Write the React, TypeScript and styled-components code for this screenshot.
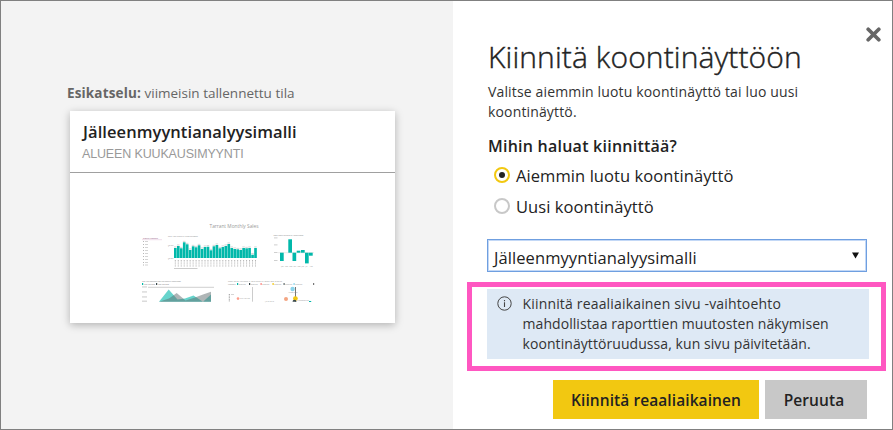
import React, { useState } from 'react';
import styled, { createGlobalStyle } from 'styled-components';

const GlobalStyle = createGlobalStyle`
  * { box-sizing: border-box; }
  body { margin: 0; }
  body, button { font-family: "Open Sans", "Noto Sans", sans-serif; color: #222; }
`;

const Dialog = styled.main`
  display: flex;
  width: 893px;
  height: 430px;
  border: 1px solid #808080;
  background: #fff;
  overflow: hidden;
`;

const PreviewPane = styled.section`
  flex: none;
  width: 452px;
  padding: 82px 0 0 66px;
  background: #f3f3f3;
`;

const PreviewLabel = styled.div`
  font-size: 13.5px;
  line-height: 20px;
  color: #666;
  white-space: nowrap;
  b { font-weight: 700; letter-spacing: 0.15px; }
`;

const Card = styled.article`
  display: flex;
  flex-direction: column;
  width: 325px;
  height: 212px;
  margin: 8px 0 0 3px;
  background: #fff;
  box-shadow: 0 2px 8px rgba(0, 0, 0, 0.27);
`;

const CardHeader = styled.header`
  height: 62px;
  padding: 9px 0 0 13px;
  border-bottom: 1px solid #a0a0a0;
  white-space: nowrap;
`;

const CardTitle = styled.h2`
  margin: 0;
  font-size: 16.5px;
  font-weight: 600;
  line-height: 24px;
  letter-spacing: 0.07px;
`;

const CardSubtitle = styled.div`
  margin: 2px 0 0 -1px;
  font: 12.5px/16px "Liberation Sans", sans-serif;
  letter-spacing: -0.15px;
  color: #999;
`;

const Thumbnail = styled.svg`
  display: block;
  width: 325px;
  height: 150px;
`;

const FormPane = styled.section`
  display: flex;
  flex: 1;
  padding: 35px 0 0 35px;
  white-space: nowrap;
`;

const Form = styled.div`
  flex: none;
  width: 378px;
`;

const CloseButton = styled.button`
  flex: none;
  width: 15px;
  height: 15px;
  margin-top: -9px;
  padding: 0;
  border: 0;
  background: none;
  svg { display: block; }
`;

const Title = styled.h1`
  margin: 1px 0 0;
  font-size: 30px;
  font-weight: 300;
  line-height: 40px;
  letter-spacing: 0.1px;
  -webkit-text-stroke: 0.4px #222;
`;

const Description = styled.p`
  margin: 5px 0 0;
  font-size: 14px;
  line-height: 20px;
  letter-spacing: 0.15px;
  color: #333;
`;

const Question = styled.h3`
  margin: 13px 0 3px;
  font-size: 16px;
  font-weight: 600;
  line-height: 22px;
  letter-spacing: 0.24px;
`;

const Option = styled.label`
  display: flex;
  align-items: center;
  gap: 6px;
  height: 31px;
  padding-left: 6px;
  font-size: 16.5px;
  letter-spacing: 0.08px;
`;

const Radio = styled.span<{ $checked: boolean }>`
  display: grid;
  place-items: center;
  width: 16px;
  height: 16px;
  margin-top: -1px;
  border: 2px solid ${p => (p.$checked ? '#f2c811' : '#c8c8c8')};
  border-radius: 50%;
  &::after {
    content: "";
    width: 6px;
    height: 6px;
    border-radius: 50%;
    background: ${p => (p.$checked ? '#222' : 'transparent')};
  }
`;

const Select = styled.div`
  display: flex;
  align-items: center;
  justify-content: space-between;
  width: 380px;
  height: 33px;
  margin: 17px 0 0 -1px;
  padding: 3px 7px 0 6px;
  border: 1px solid #6f9fe0;
  box-shadow: inset 0 0 0 1px #c3d8f6;
  font-size: 16.5px;
  letter-spacing: 0.08px;
  svg { margin-top: -3px; }
`;

const Highlight = styled.div`
  width: 419px;
  height: 89px;
  margin: 10px 0 0 -21px;
  padding: 2px 12px 7px 15px;
  border: 5px solid #ff57c1;
`;

const InfoBox = styled.div`
  display: flex;
  gap: 10.5px;
  height: 70px;
  padding: 5px 0 0 10px;
  background: #dee9f5;
  svg { flex: none; margin-top: 2px; }
`;

const InfoLine = styled.div<{ $spacing: number }>`
  font-size: 14px;
  line-height: 20px;
  letter-spacing: ${p => p.$spacing}px;
  color: #333;
`;

const Actions = styled.div`
  display: flex;
  gap: 6px;
  margin: 9px 0 0 65px;
`;

const ActionButton = styled.button<{ $primary?: boolean }>`
  width: ${p => (p.$primary ? 206 : 102)}px;
  height: 39px;
  flex: none;
  padding: 1px ${p => (p.$primary ? 0 : 4)}px 0 0;
  border: 0;
  background: ${p => (p.$primary ? '#f2c811' : '#c8c8c8')};
  font-size: 15.5px;
  font-weight: 600;
  letter-spacing: 0.08px;
`;

const salesBars = [248, 246, 248.3, 242.3, 244.3, 250, 246.3, 247.3, 245.3, 249, 247, 246.7, 250.3, 246.3, 245, 248.3, 247, 246, 244, 248, 249, 249.3, 250, 248, 248.3, 248, 254.7, 248];
const varianceBars = [[280, 252.7, 8.3], [288.3, 239.3, 13.4], [292.5, 252.7, 8.3], [296.7, 250.7, 2], [301, 250, 2.7], [305, 252.7, 10.7], [309, 252.7, 3]];
const legend = [[237, '#01b8aa'], [249, '#374649'], [260.5, '#fd817e'], [272.5, '#f2c811'], [283.5, '#5f6b6d'], [293.5, '#8ad4eb'], [313, '#777']] as const;

function ReportThumbnail() {
  return (
    <Thumbnail viewBox="70 173 325 150" fontFamily="Open Sans, sans-serif" fontSize="1.9" fill="#888">
      <text x="209.5" y="227.6" fontSize="5.8" fill="#999" textLength="49" lengthAdjust="spacingAndGlyphs">Tarrant Monthly Sales</text>

      <text x="143" y="239" fill="#8b4a75" textLength="15">District Manager</text>
      <path d="M142 239.7H162" stroke="#e4c8dc" strokeWidth=".6" />
      {[242, 245, 248, 251, 254, 257, 260, 263, 265.5].map(y => (
        <g key={y} opacity=".6">
          <rect x="143" y={y - 1} width="1" height="1" />
          <rect x="145" y={y - 1} width="3" height="1" opacity=".6" />
        </g>
      ))}

      <text x="168" y="237.2" textLength="30">This Year Sales by DistrictMonth</text>
      <text x="168" y="246">$0.5M</text>
      <text x="168" y="259">$0.0M</text>
      {salesBars.map((y, i) => (
        <g key={i}>
          <rect x={174 + i * 2.97} y={y} width="2.65" height={258 - y} fill="#01b8aa" />
          <rect x={174 + i * 2.97} y={y - 1.4} width="2.5" height=".7" opacity=".5" />
          <path d={`M${175.3 + i * 2.97} 260v3.6m0 1v2`} stroke="#aaa" strokeWidth=".9" strokeDasharray="1 .5" />
        </g>
      ))}
      <path d="M174 268.5H197.5" stroke="#ccc" />

      <text x="273.5" y="236" textLength="30">Total Sales Variance by FiscalMonth</text>
      {[238.5, 245.5, 253, 261].map(y => <rect key={y} x="274" y={y - 1} width="3.5" height=".8" opacity=".5" />)}
      <path d="M278 252.7H314" stroke="#ccc" strokeWidth=".4" />
      {varianceBars.map(([x, y, h]) => <rect key={x} x={x} y={y} width="3.7" height={h} fill="#01b8aa" />)}
      {['Jan', 'Feb', 'Mar', 'Apr', 'May', 'Jun', 'Jul', 'Aug'].map((m, i) => (
        <text key={m} x={281 + i * 4.1} y="267.3" fontSize="1.7">{m}</text>
      ))}

      <text x="142" y="282" textLength="39">This Year Sales and Last Year Sales by FiscalMonth</text>
      <rect x="142" y="283" width="1.2" height="2" fill="#01b8aa" />
      <text x="144" y="284.8" textLength="11">This Year Sales</text>
      <rect x="156" y="283" width="1.2" height="2" fill="#374649" />
      <text x="158" y="284.8" textLength="11">Last Year Sales</text>
      {[287.5, 292.5, 297.5, 301.7].map(y => <rect key={y} x="142" y={y - 1} width="5" height=".9" opacity=".5" />)}
      <path d="M148 287.3H214" stroke="#bbb" strokeWidth=".7" />
      <path d="M159 301.7L168.7 289.5L177.5 299.5L185 298.5L193.5 295.6L203 301.7L211 294.5V301.7Z" fill="#01b8aa" opacity=".6" />
      <path d="M159 301.7L169 298.5L176.7 293L185.5 300.5L195 297.5L203 294.5L211 291.7V301.7Z" fill="#5f6b6d" opacity=".5" />

      <text x="228" y="282" textLength="54">Total Sales Variance % and Sales by Store and District</text>
      <text x="228" y="285" textLength="8">Category</text>
      {legend.map(([x, color], i) => (
        <g key={x}>
          <rect x={x} y="283" width="1.2" height="2" fill={color} />
          {i < 6 && <text x={x + 1.8} y="284.8" textLength="7">District</text>}
        </g>
      ))}
      <path d="M252.5 287V301.7" stroke="#ccc" />
      <path d="M229.3 294V301.7" stroke="#999" strokeDasharray="1 .6" />
      <rect x="231" y="294" width="3" height=".7" opacity=".5" />
      <circle cx="238" cy="298.6" r="1.3" fill="#fd9c8b" />
      <text x="240" y="299.3" textLength="10">Children</text>
      <text x="265" y="301.7" textLength="9">Juniors</text>
      <circle cx="286" cy="299" r="2" fill="#f4a582" />
      <path d="M295.5 287V301.7" stroke="#777" />
      <circle cx="292.6" cy="289" r="2.2" fill="#8ad4eb" />
      <text x="288.5" y="293.3" textLength="9">Womens</text>
      <circle cx="295.4" cy="298.6" r="2.4" fill="#f2c811" />
      <path d="M292.5 301.7a2 2 0 0 1 4 0Z" fill="#374649" />
      <text x="297" y="301" textLength="12">Accessories</text>
      <rect x="309" y="301" width="2.2" height="1" fill="#01b8aa" />
    </Thumbnail>
  );
}

export default function App() {
  const [choice, setChoice] = useState('existing');
  return (
    <>
      <GlobalStyle />
      <Dialog>
        <PreviewPane>
          <PreviewLabel><b>Esikatselu:</b> viimeisin tallennettu tila</PreviewLabel>
          <Card>
            <CardHeader>
              <CardTitle>Jälleenmyyntianalyysimalli</CardTitle>
              <CardSubtitle>ALUEEN KUUKAUSIMYYNTI</CardSubtitle>
            </CardHeader>
            <ReportThumbnail />
          </Card>
        </PreviewPane>
        <FormPane>
          <Form>
            <Title>Kiinnitä koontinäyttöön</Title>
            <Description>Valitse aiemmin luotu koontinäyttö tai luo uusi<br />koontinäyttö.</Description>
            <Question>Mihin haluat kiinnittää?</Question>
            <Option onClick={() => setChoice('existing')}>
              <Radio $checked={choice === 'existing'} />Aiemmin luotu koontinäyttö
            </Option>
            <Option onClick={() => setChoice('new')}>
              <Radio $checked={choice === 'new'} />Uusi koontinäyttö
            </Option>
            <Select role="combobox">
              Jälleenmyyntianalyysimalli
              <svg width="7" height="7"><path d="M0 0.5H7L3.5 6.5Z" fill="#111" /></svg>
            </Select>
            <Highlight>
              <InfoBox>
                <svg width="15" height="15" fill="none" stroke="#444">
                  <circle cx="7.5" cy="7.5" r="6.7" strokeWidth="1" />
                  <path d="M7.5 6.3V11M7.5 4V5.2" strokeWidth="1.1" />
                </svg>
                <div>
                  <InfoLine $spacing={0.17}>Kiinnitä reaaliaikainen sivu -vaihtoehto</InfoLine>
                  <InfoLine $spacing={0.07}>mahdollistaa raporttien muutosten näkymisen</InfoLine>
                  <InfoLine $spacing={0.07}>koontinäyttöruudussa, kun sivu päivitetään.</InfoLine>
                </div>
              </InfoBox>
            </Highlight>
            <Actions>
              <ActionButton $primary>Kiinnitä reaaliaikainen</ActionButton>
              <ActionButton>Peruuta</ActionButton>
            </Actions>
          </Form>
          <CloseButton aria-label="Sulje">
            <svg width="15" height="15"><path d="M2.2 2.2L12.8 12.8M12.8 2.2L2.2 12.8" stroke="#666" strokeWidth="3.7" strokeLinecap="round" /></svg>
          </CloseButton>
        </FormPane>
      </Dialog>
    </>
  );
}
